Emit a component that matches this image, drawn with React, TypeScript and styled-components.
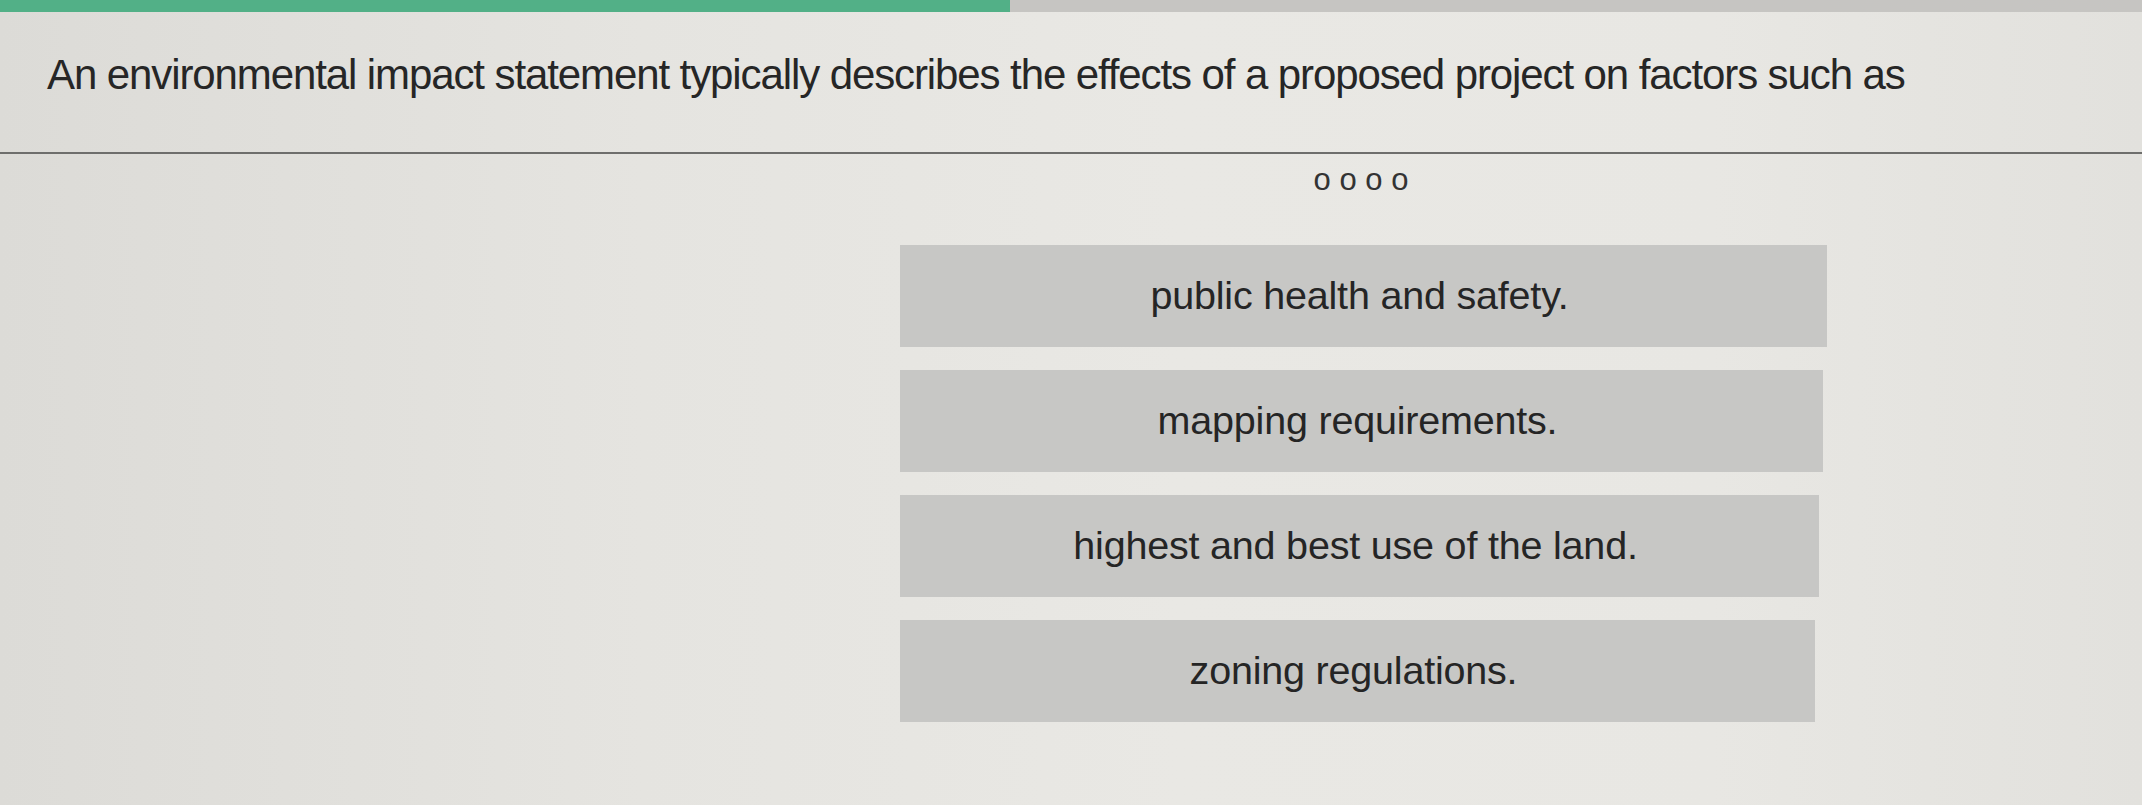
import styled, { createGlobalStyle } from 'styled-components';

const GlobalStyle = createGlobalStyle`
  html, body {
    margin: 0;
    padding: 0;
  }
  body {
    background: #e5e4e0;
    font-family: "Liberation Sans", Arial, sans-serif;
  }
`;

const Page = styled.div`
  width: 2142px;
  height: 805px;
  overflow: hidden;
  background: linear-gradient(90deg, #dcdbd7 0%, #e5e4e0 30%, #e9e8e4 55%, #e8e7e3 80%, #e2e1dd 100%);
`;

const ProgressBar = styled.div`
  display: flex;
  height: 12px;
  background: #c6c5c2;
`;

const ProgressFill = styled.div<{ $width: number }>`
  width: ${(p) => p.$width}px;
  background: #52b087;
`;

const Header = styled.div`
  padding: 38px 0 53px 47px;
  border-bottom: 2px solid #6e6e6c;
`;

const Question = styled.h1`
  margin: 0;
  font-size: 42px;
  line-height: 49px;
  font-weight: 400;
  letter-spacing: -1.1px;
  color: #262626;
  white-space: nowrap;
`;

const Body = styled.div`
  display: flex;
  flex-direction: column;
  align-items: center;
  width: 922px;
  margin-left: 900px;
`;

const Dots = styled.div`
  margin-top: 10px;
  font-size: 31px;
  line-height: 32px;
  color: #333;
`;

const Options = styled.div`
  margin-top: 49px;
  width: 100%;
  display: flex;
  flex-direction: column;
  align-items: flex-start;
  gap: 23px;
`;

const Option = styled.button<{ $width: number }>`
  display: flex;
  align-items: center;
  justify-content: center;
  height: 102px;
  width: ${(p) => p.$width}px;
  border: none;
  padding: 0 8px 2px 0;
  background: #c7c7c5;
  font-family: "Liberation Sans", Arial, sans-serif;
  font-size: 39.5px;
  letter-spacing: -0.2px;
  color: #252525;
  cursor: pointer;
`;

const answers = [
  { text: 'public health and safety.', width: 927 },
  { text: 'mapping requirements.', width: 923 },
  { text: 'highest and best use of the land.', width: 919 },
  { text: 'zoning regulations.', width: 915 },
];

export default function App() {
  return (
    <Page>
      <GlobalStyle />
      <ProgressBar>
        <ProgressFill $width={1010} />
      </ProgressBar>
      <Header>
        <Question>
          An environmental impact statement typically describes the effects of a proposed project on factors such as
        </Question>
      </Header>
      <Body>
        <Dots>o o o o</Dots>
        <Options>
          {answers.map((a) => (
            <Option key={a.text} $width={a.width}>
              {a.text}
            </Option>
          ))}
        </Options>
      </Body>
    </Page>
  );
}
